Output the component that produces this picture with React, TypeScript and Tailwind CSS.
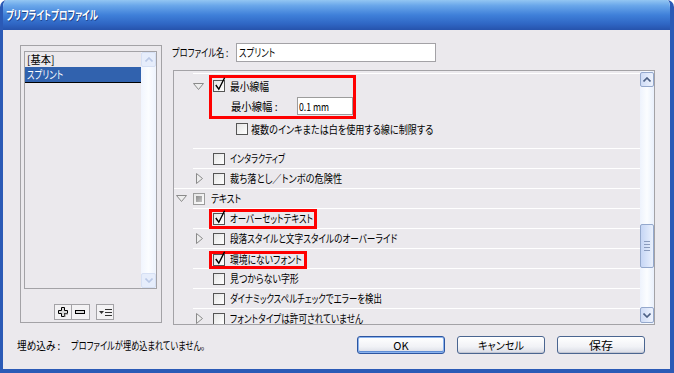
import React, { useLayoutEffect, useRef, useState } from "react";

// ---------------------------------------------------------------------------
// text that is squeezed to the width the old bitmap font had
// ---------------------------------------------------------------------------

function Fit({ w, children, center = false }: { w: number; children: React.ReactNode; center?: boolean }) {
  const ref = useRef<HTMLSpanElement>(null);
  const [scale, setScale] = useState(1);

  useLayoutEffect(() => {
    const measure = () => {
      const el = ref.current;
      if (el && el.offsetWidth > 0) setScale(w / el.offsetWidth);
    };
    measure();
    document.fonts?.ready.then(measure);
  }, [w]);

  return (
    <span
      ref={ref}
      className={`inline-block shrink-0 whitespace-nowrap leading-none ${center ? "origin-center" : "origin-left"}`}
      style={{ transform: `scaleX(${scale})` }}
    >
      {children}
    </span>
  );
}

// ---------------------------------------------------------------------------
// small pieces
// ---------------------------------------------------------------------------

function Check({ on = false, mixed = false }: { on?: boolean; mixed?: boolean }) {
  return (
    <span
      className={`relative flex h-[12px] w-[12px] shrink-0 items-center justify-center border bg-[linear-gradient(135deg,#e4e4e4,#ffffff)] ${
        mixed ? "border-[#9c9c9c]" : "border-[#555555]"
      }`}
    >
      {on && (
        <svg width="12" height="15" viewBox="0 0 12 15" className="absolute -top-[5px] left-0">
          <path d="M1.8 9 L4.8 13.2 L10.6 1.8" fill="none" stroke="#000" strokeWidth="1.4" />
        </svg>
      )}
      {mixed && <span className="h-[6px] w-[6px] bg-[linear-gradient(135deg,#8c8c8c,#c4c4c4)]" />}
    </span>
  );
}

function TriDown() {
  return (
    <svg width="11" height="7" viewBox="0 0 11 7" className="shrink-0">
      <path d="M0.5 0.5 H10.5 L5.5 6.5 Z" fill="#ededed" stroke="#8a8a8a" />
    </svg>
  );
}

function TriRight() {
  return (
    <svg width="7" height="11" viewBox="0 0 7 11" className="shrink-0">
      <path d="M0.5 0.5 V10.5 L6.5 5.5 Z" fill="#ededed" stroke="#8a8a8a" />
    </svg>
  );
}

function Chevron({ up, color }: { up: boolean; color: string }) {
  return (
    <svg width="8" height="5" viewBox="0 0 8 5">
      <path d={up ? "M0.5 4.5 L4 1 L7.5 4.5" : "M0.5 0.5 L4 4 L7.5 0.5"} fill="none" stroke={color} strokeWidth="1.6" />
    </svg>
  );
}

function Label({ w, children }: { w: number; children: React.ReactNode }) {
  return (
    <span className="ml-[5px] flex">
      <Fit w={w}>{children}</Fit>
    </span>
  );
}

function XpButton({ children, w, primary = false }: { children: React.ReactNode; w: number; primary?: boolean }) {
  return (
    <button
      className={`flex h-[18px] w-[88px] items-center justify-center overflow-hidden rounded-[3px] border bg-[linear-gradient(to_bottom,#ffffff,#f1f2f6_60%,#d8dbe5)] text-[11px] leading-none text-black ${
        primary
          ? "border-[#2c55a0] shadow-[inset_0_0_0_1px_#8bb3ee,inset_0_-1px_0_1px_#5f8ed6]"
          : "border-[#4a6590] shadow-[inset_0_-1px_0_#c3c7d3]"
      }`}
    >
      <Fit w={w} center>
        {children}
      </Fit>
    </button>
  );
}

// ---------------------------------------------------------------------------
// main
// ---------------------------------------------------------------------------

export default function App() {
  return (
    <div className="h-[373px] w-[674px] overflow-hidden bg-white font-['Noto_Sans_CJK_JP','Noto_Sans',sans-serif] text-[11px] text-black [font-feature-settings:'palt']">
      <div className="flex h-full flex-col overflow-hidden rounded-t-[7px] border-b-[4px] border-l-[3px] border-r-[4px] border-[#2b5ab6]">
        {/* title bar */}
        <div className="-mx-[3px] flex h-[30px] shrink-0 items-center bg-[linear-gradient(to_bottom,#93c6f2_0%,#6aa7ea_18%,#3f80d9_50%,#2f66c4_80%,#2653ac_100%)] pl-[6px]">
          <span className="text-[12px] font-bold text-white [text-shadow:1px_1px_0_#1d3f86]">
            <Fit w={92}>プリフライトプロファイル</Fit>
          </span>
        </div>

        {/* body */}
        <div className="flex flex-1 flex-col bg-[#ebe9ed]">
          <div className="flex pt-[13px]">
            {/* left group */}
            <div className="ml-[17px] mt-[2px] flex h-[278px] w-[142px] flex-col border border-[#a3a2a6] pl-[3px] pt-[5px]">
              <div className="flex h-[238px] w-[133px] border border-[#a3a2a6]">
                <div className="flex-1 overflow-hidden">
                  <div className="flex h-[15px] items-center pl-[2px]">
                    <Fit w={27}>[基本]</Fit>
                  </div>
                  <div className="flex h-[16px] items-center border-b border-black bg-[#3162ae] pl-[2px] text-white">
                    <Fit w={36}>スプリント</Fit>
                  </div>
                </div>
                <div className="flex w-[15px] flex-col bg-[linear-gradient(to_right,#f1f5fe,#fbfdff,#eef3fd)]">
                  <div className="flex h-[15px] items-center justify-center rounded-[2px] border border-[#d6e0f4] bg-[#e6edfb]">
                    <Chevron up color="#b9c8e6" />
                  </div>
                  <div className="flex-1" />
                  <div className="flex h-[15px] items-center justify-center rounded-[2px] border border-[#d6e0f4] bg-[#e6edfb]">
                    <Chevron up={false} color="#b9c8e6" />
                  </div>
                </div>
              </div>
              <div className="ml-[30px] mt-[15px] flex">
                <div className="flex h-[16px] w-[18px] items-center justify-center border border-[#a3a2a6] bg-[#f3f2f4]">
                  <svg width="11" height="11" viewBox="0 0 11 11">
                    <path d="M3.5 0.5 H6.5 V3.5 H9.5 V6.5 H6.5 V9.5 H3.5 V6.5 H0.5 V3.5 H3.5 Z" fill="#d9d9d9" stroke="#000" />
                    <path d="M7 10 V7 H10" fill="none" stroke="#8a8a8a" />
                  </svg>
                </div>
                <div className="flex h-[16px] w-[18px] items-center justify-center border border-l-0 border-[#a3a2a6] bg-[#f3f2f4]">
                  <svg width="11" height="5" viewBox="0 0 11 5">
                    <rect x="0.5" y="0.5" width="9" height="3" fill="#d9d9d9" stroke="#000" />
                  </svg>
                </div>
                <div className="ml-[6px] flex h-[16px] w-[18px] items-center justify-center gap-[1px] border border-[#a3a2a6] bg-[#f3f2f4]">
                  <svg width="5" height="3" viewBox="0 0 5 3">
                    <path d="M0 0 H5 L2.5 3 Z" fill="#333" />
                  </svg>
                  <svg width="7" height="9" viewBox="0 0 7 9">
                    <path d="M0 1.5 H7 M0 4.5 H7 M0 7.5 H7" stroke="#333" />
                  </svg>
                </div>
              </div>
            </div>

            {/* right column */}
            <div className="ml-[11px] flex w-[482px] flex-col">
              <div className="-ml-px flex h-[19px] items-center">
                <span className="flex w-[64px]">
                  <Fit w={56}>プロファイル名 :</Fit>
                </span>
                <div className="flex h-[19px] w-[200px] items-center border border-[#a3a2a6] bg-white pl-[2px]">
                  <Fit w={36}>スプリント</Fit>
                </div>
              </div>

              {/* tree panel */}
              <div className="mt-[8px] flex h-[255px] border border-[#a3a2a6]">
                <div className="flex-1 overflow-hidden">
                  <div className="h-[2px]" />

                  {/* 最小線幅 */}
                  <div className="ml-[19px] h-[75px] border-t border-white">
                    <div className="flex items-start">
                      <div className="mt-[9px]">
                        <TriDown />
                      </div>
                      <div className="ml-[5px] mt-[1px] h-[44px] w-[147px] border-[3px] border-[#ff0000] pl-[1px] pt-[2px]">
                        <div className="flex h-[12px] items-center">
                          <Check on />
                          <Label w={39}>最小線幅</Label>
                        </div>
                        <div className="mt-[5px] flex h-[18px] items-center">
                          <span className="ml-[18px] flex w-[67px]">
                            <Fit w={47}>最小線幅 :</Fit>
                          </span>
                          <div className="flex h-[18px] w-[56px] items-center border border-[#9c9c9c] bg-white pl-[1px]">
                            <Fit w={30}>0.1 mm</Fit>
                          </div>
                        </div>
                      </div>
                    </div>
                    <div className="ml-[43px] mt-[4px] flex h-[12px] items-center">
                      <Check />
                      <span className="ml-[3px] flex">
                        <Fit w={182}>複数のインキまたは白を使用する線に制限する</Fit>
                      </span>
                    </div>
                  </div>

                  <div className="ml-[19px] flex h-[20px] items-center border-t border-white pl-[20px]">
                    <Check />
                    <Label w={55}>インタラクティブ</Label>
                  </div>

                  <div className="ml-[19px] flex h-[20px] items-center border-t border-white pl-[3px]">
                    <TriRight />
                    <span className="ml-[10px] flex items-center">
                      <Check />
                      <Label w={112}>裁ち落とし／トンボの危険性</Label>
                    </span>
                  </div>

                  <div className="flex h-[20px] items-center border-t border-white pl-[2px]">
                    <TriDown />
                    <span className="ml-[6px] flex items-center">
                      <Check mixed />
                      <span className="ml-[6px] flex">
                        <Fit w={30}>テキスト</Fit>
                      </span>
                    </span>
                  </div>

                  <div className="ml-[19px] flex h-[20px] items-center border-t border-white pl-[16px]">
                    <div className="flex h-[20px] w-[108px] items-center border-[3px] border-[#ff0000] pl-[1px]">
                      <Check on />
                      <Label w={83}>オーバーセットテキスト</Label>
                    </div>
                  </div>

                  <div className="ml-[19px] flex h-[20px] items-center border-t border-white pl-[3px]">
                    <TriRight />
                    <span className="ml-[10px] flex items-center">
                      <Check />
                      <Label w={167}>段落スタイルと文字スタイルのオーバーライド</Label>
                    </span>
                  </div>

                  <div className="ml-[19px] flex h-[20px] items-center border-t border-white pl-[16px]">
                    <div className="mt-[2px] flex h-[18px] w-[98px] items-center border-[3px] border-[#ff0000] pl-[1px]">
                      <Check on />
                      <Label w={72}>環境にないフォント</Label>
                    </div>
                  </div>

                  <div className="ml-[19px] flex h-[20px] items-center border-t border-white pl-[20px]">
                    <Check />
                    <Label w={69}>見つからない字形</Label>
                  </div>

                  <div className="ml-[19px] flex h-[20px] items-center border-t border-white pl-[20px]">
                    <Check />
                    <Label w={152}>ダイナミックスペルチェックでエラーを検出</Label>
                  </div>

                  <div className="ml-[19px] flex h-[20px] items-center border-t border-white pl-[3px]">
                    <TriRight />
                    <span className="ml-[10px] flex items-center">
                      <Check />
                      <Label w={133}>フォントタイプは許可されていません</Label>
                    </span>
                  </div>
                </div>

                {/* scrollbar */}
                <div className="flex w-[14px] flex-col bg-[linear-gradient(to_right,#eef3fd,#fbfdff,#e9f0fc)]">
                  <div className="mt-px flex h-[15px] items-center justify-center rounded-[2px] border border-[#94a8cc] bg-[linear-gradient(to_right,#cfdcf6,#eef3fd)]">
                    <Chevron up color="#4d6185" />
                  </div>
                  <div className="mt-[137px] flex h-[44px] flex-col items-center justify-center gap-[2px] rounded-[2px] border border-[#94a8cc] bg-[linear-gradient(to_right,#c6d6f5,#e9f0fd)]">
                    <span className="h-px w-[6px] bg-[#8a9bbd]" />
                    <span className="h-px w-[6px] bg-[#8a9bbd]" />
                    <span className="h-px w-[6px] bg-[#8a9bbd]" />
                    <span className="h-px w-[6px] bg-[#8a9bbd]" />
                  </div>
                  <div className="flex-1" />
                  <div className="mb-px flex h-[16px] items-center justify-center rounded-[2px] border border-[#94a8cc] bg-[linear-gradient(to_right,#cfdcf6,#eef3fd)]">
                    <Chevron up={false} color="#4d6185" />
                  </div>
                </div>
              </div>
            </div>
          </div>

          {/* bottom row */}
          <div className="mt-[11px] flex h-[18px] items-center pr-[25px]">
            <span className="ml-[14px] flex w-[54px]">
              <Fit w={43}>埋め込み :</Fit>
            </span>
            <span className="flex">
              <Fit w={134}>プロファイルが埋め込まれていません。</Fit>
            </span>
            <div className="ml-auto flex gap-[12px]">
              <XpButton primary w={15}>
                OK
              </XpButton>
              <XpButton w={46}>キャンセル</XpButton>
              <XpButton w={24}>保存</XpButton>
            </div>
          </div>
        </div>
      </div>
    </div>
  );
}
